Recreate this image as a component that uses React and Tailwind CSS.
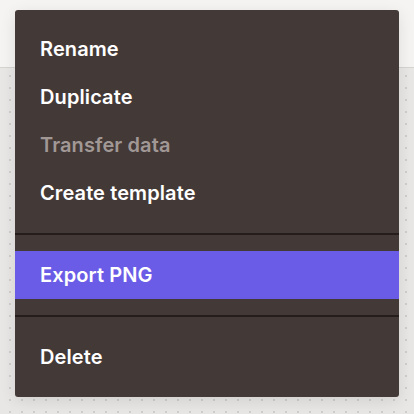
export default function App() {
  const items = [
    { label: "Rename" },
    { label: "Duplicate" },
    { label: "Transfer data", disabled: true },
    { label: "Create template" },
  ];

  return (
    <div className="relative w-[414px] h-[414px] overflow-hidden bg-[#e8e7e5] font-['Inter',sans-serif]">
      <div className="h-[68px] bg-[#f5f4f2] border-b border-[#d6d4d1]" />
      <div className="h-[346px] bg-[radial-gradient(circle,#d0cecb_0.8px,transparent_1px)] bg-[length:12px_12px] bg-[position:4px_2px]" />

      <div className="absolute left-[15px] top-[10px] w-[384px] rounded-[3px] bg-[#433937] pt-[15px] pb-4 shadow-[0_4px_16px_rgba(0,0,0,0.1)]">
        {items.map((item) => (
          <div
            key={item.label}
            className={
              "h-12 flex items-center px-[25px] text-[20px] font-semibold tracking-[0.1px] " +
              (item.disabled ? "text-[#a19896]" : "text-white")
            }
          >
            {item.label}
          </div>
        ))}
        <div className="my-4 h-[2px] bg-[#241d1b]" />
        <div className="h-12 flex items-center px-[25px] text-[20px] font-semibold tracking-[0.1px] text-white bg-[#6a5ce6]">
          Export PNG
        </div>
        <div className="my-4 h-[2px] bg-[#241d1b]" />
        <div className="h-12 flex items-center px-[25px] text-[20px] font-semibold tracking-[0.1px] text-white">
          Delete
        </div>
      </div>
    </div>
  );
}
